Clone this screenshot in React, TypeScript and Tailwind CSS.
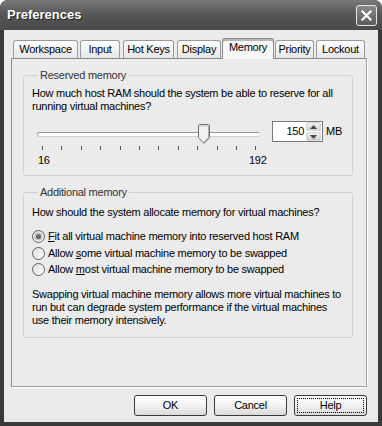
import React from "react";

const font = { fontFamily: '"Liberation Sans", Arial, sans-serif' };

function Tab({ label, w, ml, selected }: { label: string; w: number; ml: number; selected?: boolean }) {
  return (
    <div
      style={{ width: w, marginLeft: ml }}
      className={
        selected
          ? "relative z-10 h-[21px] -mb-px flex items-start justify-center pt-[2px] rounded-t-[3px] border border-b-0 border-[#8c8c8c] bg-[#f7f7f7] text-[11px] leading-[13px] tracking-[-0.25px] text-black shadow-[inset_0_2px_0_#b5b5b5]"
          : "h-[18px] flex items-start justify-center pt-[2px] rounded-t-[3px] border border-b-0 border-[#9a9a9a] bg-gradient-to-b from-[#ffffff] to-[#e6e6e6] text-[11px] leading-[13px] tracking-[-0.25px] text-black"
      }
    >
      {label}
    </div>
  );
}

function Thumb() {
  return (
    <svg width="12" height="20" viewBox="0 0 12 20" className="block">
      <path d="M0.5 1.5 Q0.5 0.5 1.5 0.5 H10.5 Q11.5 0.5 11.5 1.5 V13.5 L6 19.5 L0.5 13.5 Z" fill="#f2f2f2" stroke="#6e6e6e" />
      <path d="M1.5 2 H10.5" stroke="#bdbdbd" />
      <path d="M10.5 2 V13.2 L6 18" stroke="#b0b0b0" fill="none" />
    </svg>
  );
}

function Radio({ checked }: { checked?: boolean }) {
  return (
    <svg width="13" height="13" viewBox="0 0 13 13" className="block shrink-0">
      <defs>
        <linearGradient id="rg" x1="0" y1="0" x2="1" y2="1">
          <stop offset="0" stopColor="#dcdcdc" />
          <stop offset="1" stopColor="#ffffff" />
        </linearGradient>
      </defs>
      <circle cx="6.5" cy="6.5" r="6" fill="url(#rg)" stroke="#5e5e5e" />
      {checked && <circle cx="6.5" cy="6.5" r="2.6" fill="#6a6a6a" />}
      {checked && <circle cx="6.5" cy="6.5" r="3.6" fill="none" stroke="#a8a8a8" strokeWidth="0.8" />}
    </svg>
  );
}

function Btn({ label, focus }: { label: string; focus?: boolean }) {
  return (
    <div className="w-[73px] h-[21px] rounded-[3px] border border-[#3a3a3a] bg-gradient-to-b from-[#ffffff] via-[#f2f2f2] to-[#d9d9d9] p-[2px]">
      <div
        className={
          "h-full w-full flex items-center justify-center text-[11px] leading-[13px] tracking-[-0.25px] text-black " +
          (focus ? "border border-dotted border-black" : "")
        }
      >
        {label}
      </div>
    </div>
  );
}

export default function App() {
  const ticks = Array.from({ length: 12 }, (_, i) => i);
  return (
    <div style={font} className="w-[382px] h-[426px] bg-[#3a3a3a] rounded-t-[8px] flex flex-col overflow-hidden">
      {/* Title bar */}
      <div className="h-[30px] shrink-0 flex items-center justify-between pl-[7px] pr-[5px] bg-gradient-to-b from-[#7a7a7a] via-[#555555] to-[#4a4a4a] rounded-t-[8px]">
        <span className="text-white font-bold text-[13px] leading-[16px] [text-shadow:1px_1px_0_#222]">Preferences</span>
        <div className="w-[21px] h-[21px] rounded-[3px] border border-[#e6e6e6] bg-gradient-to-b from-[#8a8a8a] to-[#5c5c5c] flex items-center justify-center">
          <svg width="11" height="11" viewBox="0 0 11 11">
            <path d="M1.5 1.5 L9.5 9.5 M9.5 1.5 L1.5 9.5" stroke="#ffffff" strokeWidth="2.2" strokeLinecap="square" />
          </svg>
        </div>
      </div>
      {/* Client */}
      <div className="flex-1 mx-[4px] mb-[4px] bg-[#ebebeb] pt-[6px] pl-[7px] pr-[11px] flex flex-col">
        {/* Tabs */}
        <div className="flex items-end h-[22px] ml-[2px]">
          <Tab label="Workspace" w={65} ml={0} />
          <Tab label="Input" w={40} ml={2} />
          <Tab label="Hot Keys" w={51} ml={3} />
          <Tab label="Display" w={44} ml={3} />
          <Tab label="Memory" w={52} ml={1} selected />
          <Tab label="Priority" w={39} ml={1} />
          <Tab label="Lockout" w={49} ml={2} />
        </div>
        {/* Panel */}
        <div className="h-[329px] border border-[#8c8c8c] border-r-[#a0a0a0] border-b-[#a0a0a0] bg-[#ebebeb] shadow-[1px_1px_0_#ffffff] pt-[10px] px-[11px] text-[11px] leading-[13px] tracking-[-0.25px] text-black">
          <fieldset className="border border-[#cfcfcf] rounded-[3px] w-[330px] h-[107px] px-[8px]">
            <legend className="ml-[6px] px-[2px] text-[#333]">Reserved memory</legend>
            <div className="pt-[5px]">
              How much host RAM should the system be able to reserve for all running virtual machines?
            </div>
            <div className="flex mt-[8px]">
              {/* slider */}
              <div className="relative w-[234px] h-[48px]">
                <div className="absolute left-[5px] top-[11px] w-[223px] h-[4px] rounded-[2px] border-t border-l border-[#9a9a9a] bg-white shadow-[0_1px_0_#d0d0d0]" />
                <div className="absolute left-[166px] top-[3px]">
                  <Thumb />
                </div>
                <div className="absolute left-0 top-[25px] w-full h-[4px]">
                  {ticks.map((i) => (
                    <div
                      key={i}
                      className="absolute top-0 w-px h-[4px] bg-[#555]"
                      style={{ left: 10 + i * 19.4 }}
                    />
                  ))}
                </div>
                <span className="absolute left-[6px] top-[33px]">16</span>
                <span className="absolute left-[217px] top-[33px]">192</span>
              </div>
              {/* spinner */}
              <div className="ml-[6px] flex items-start">
                <div className="w-[51px] h-[21px] border border-[#7a7a7a] bg-white flex items-center">
                  <span className="flex-1 text-right pr-[2px]">150</span>
                  <div className="w-[16px] h-[19px] flex flex-col gap-px pr-px">
                    <div className="flex-1 rounded-[2px] bg-gradient-to-b from-[#f0f0f0] to-[#cfcfcf] border border-[#d6d6d6] flex items-center justify-center">
                      <svg width="7" height="4" viewBox="0 0 7 4"><path d="M0 4 L3.5 0 L7 4 Z" fill="#4a4a4a" /></svg>
                    </div>
                    <div className="flex-1 rounded-[2px] bg-gradient-to-b from-[#f0f0f0] to-[#cfcfcf] border border-[#d6d6d6] flex items-center justify-center">
                      <svg width="7" height="4" viewBox="0 0 7 4"><path d="M0 0 L3.5 4 L7 0 Z" fill="#4a4a4a" /></svg>
                    </div>
                  </div>
                </div>
                <span className="ml-[3px] mt-[4px]">MB</span>
              </div>
            </div>
          </fieldset>

          <fieldset className="mt-[10px] border border-[#cfcfcf] rounded-[3px] w-[330px] h-[152px] px-[8px]">
            <legend className="ml-[6px] px-[2px] text-[#333]">Additional memory</legend>
            <div className="pt-[7px]">How should the system allocate memory for virtual machines?</div>
            <div className="mt-[11px] flex flex-col gap-[3.5px]">
              <div className="flex items-center gap-[3px] h-[13px]">
                <Radio checked />
                <span><span className="underline">F</span>it all virtual machine memory into reserved host RAM</span>
              </div>
              <div className="flex items-center gap-[3px] h-[13px]">
                <Radio />
                <span>Allow <span className="underline">s</span>ome virtual machine memory to be swapped</span>
              </div>
              <div className="flex items-center gap-[3px] h-[13px]">
                <Radio />
                <span>Allow <span className="underline">m</span>ost virtual machine memory to be swapped</span>
              </div>
            </div>
            <div className="mt-[12px]">
              Swapping virtual machine memory allows more virtual machines to run but can degrade system performance if the virtual machines use their memory intensively.
            </div>
          </fieldset>
        </div>
        {/* Buttons */}
        <div className="flex justify-end gap-[7px] mt-[8px] pr-0">
          <Btn label="OK" />
          <Btn label="Cancel" />
          <Btn label="Help" focus />
        </div>
      </div>
    </div>
  );
}
